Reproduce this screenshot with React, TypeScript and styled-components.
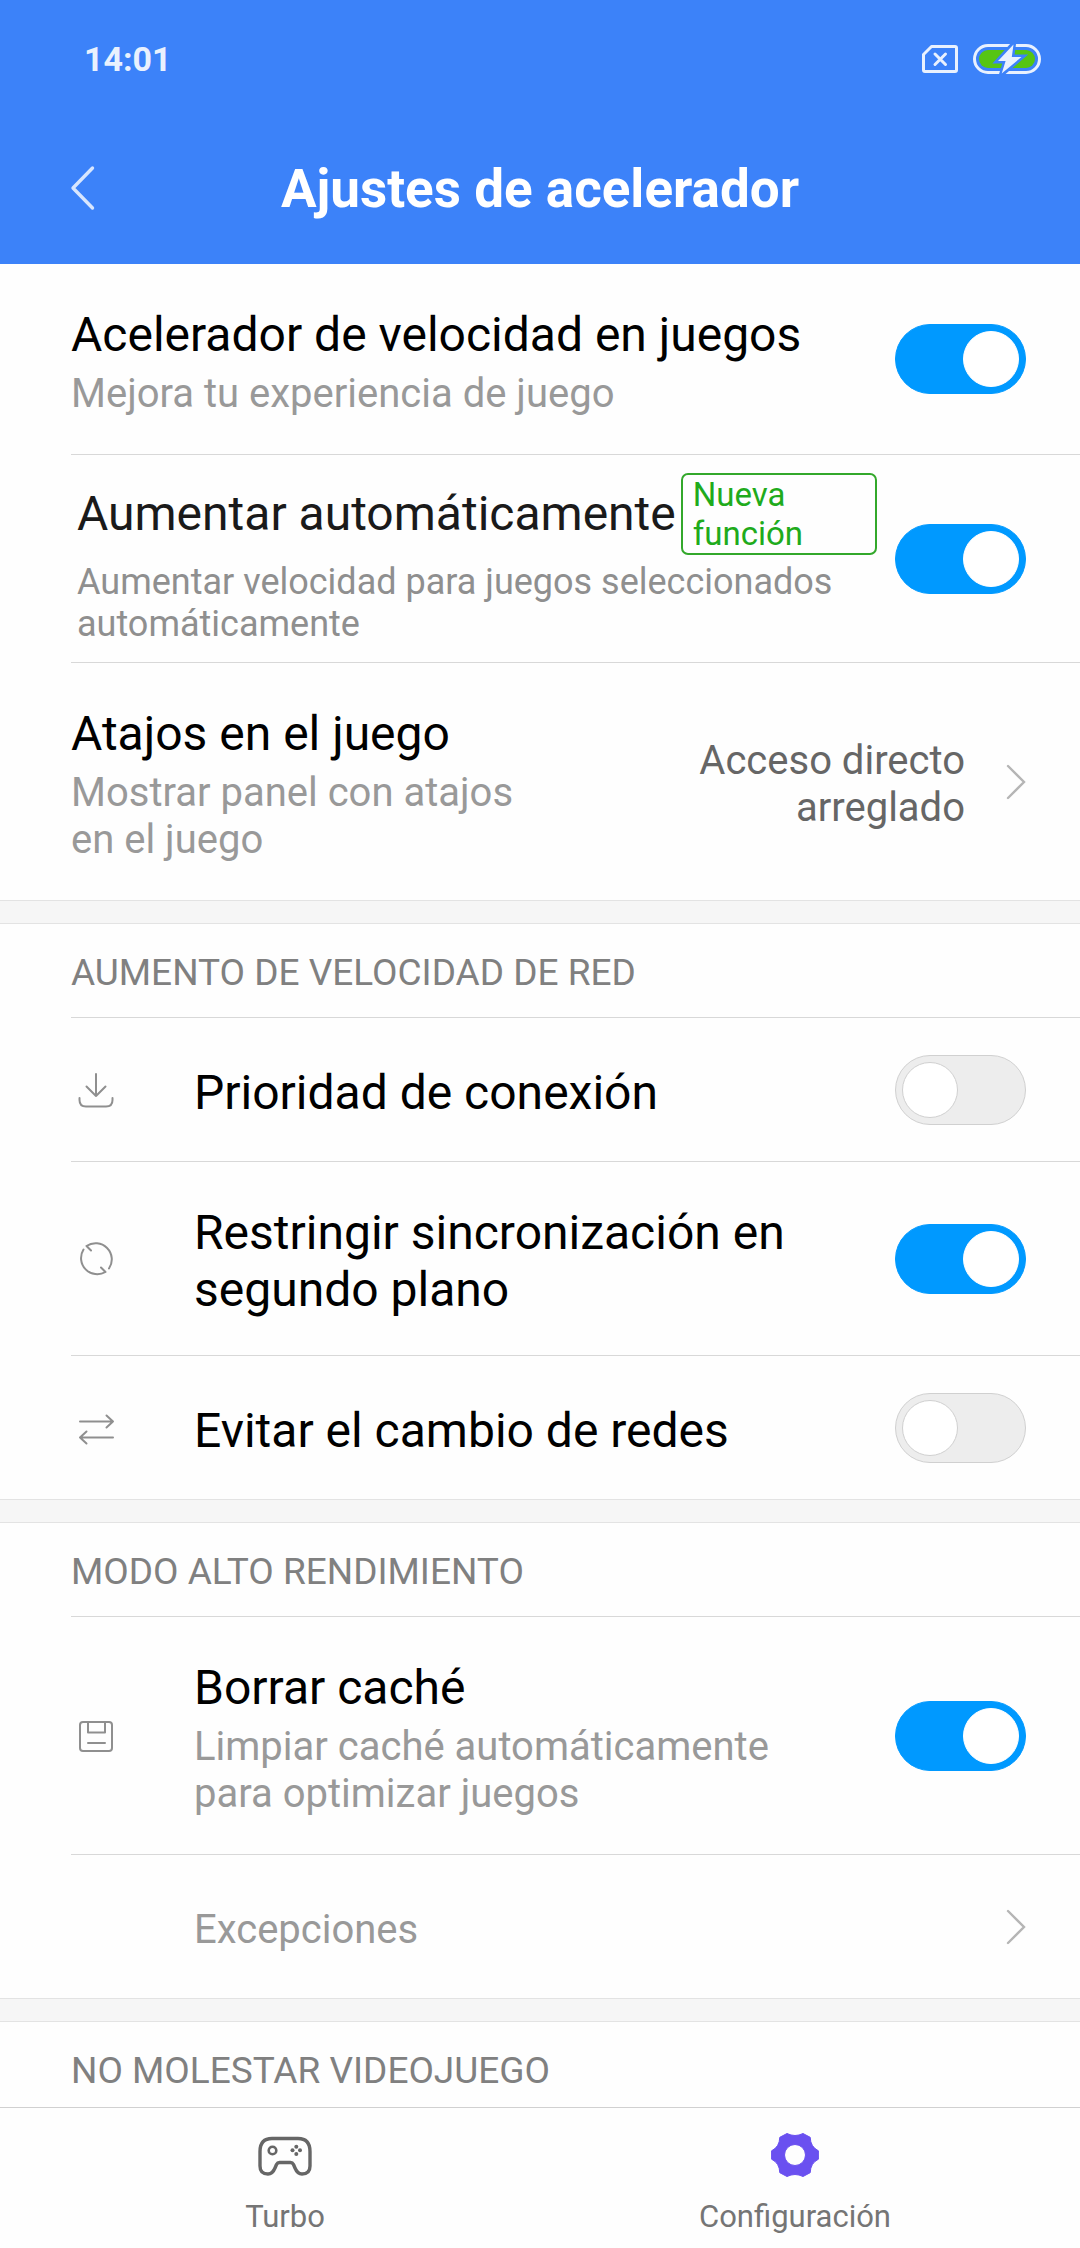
import React, { useId, useState } from "react";
import styled, { createGlobalStyle, css } from "styled-components";

const color = {
  header: "#3c82f9",
  page: "#fefefe",
  accent: "#0099ff",
  divider: "#d8d8d8",
  band: "#f6f6f6",
  bandEdge: "#e3e3e3",
  hint: "#999999",
  icon: "#8f8f8f",
};

const GlobalStyle = createGlobalStyle`
  *, *::before, *::after { box-sizing: border-box; }
  body {
    margin: 0;
    background: ${color.page};
    font-family: Roboto, "Noto Sans", sans-serif;
  }
`;

const Screen = styled.div`
  display: flex;
  flex-direction: column;
  height: 100vh;
`;

const Header = styled.header`
  flex: none;
  padding-bottom: 6px;
  background: ${color.header};
  color: #ffffff;
`;

const StatusBar = styled.div`
  display: flex;
  align-items: center;
  justify-content: space-between;
  height: 117px;
  padding: 0 39px 0 84px;
`;

const Clock = styled.time`
  font-size: 34px;
  font-weight: 700;
  line-height: 40px;
  color: #e9f1fe;
`;

const StatusIcons = styled.div`
  display: flex;
  align-items: center;
  gap: 15px;
`;

const TitleBar = styled.div`
  display: grid;
  grid-template-columns: 1fr auto 1fr;
  align-items: center;
  height: 141px;
`;

const plainButton = css`
  border: 0;
  background: none;
  font-family: inherit;
  cursor: pointer;
`;

const BackButton = styled.button`
  ${plainButton}
  display: flex;
  justify-self: start;
  padding: 0 0 0 69px;
`;

const Title = styled.h1`
  margin: 0;
  padding-top: 2px;
  font-size: 53px;
  font-weight: 700;
  line-height: 62px;
`;

const Content = styled.main`
  flex: 1;
  min-height: 0;
  overflow-y: auto;
  scrollbar-width: none;
`;

const Section = styled.section`
  & + & {
    border-top: 1px solid ${color.bandEdge};
  }
  & + &::before {
    content: "";
    display: block;
    height: 23px;
    background: ${color.band};
    border-bottom: 1px solid ${color.bandEdge};
  }
`;

const SectionTitle = styled.h2`
  display: flex;
  align-items: center;
  height: 94px;
  margin: 0 0 0 71px;
  padding-top: 3px;
  border-bottom: 1px solid ${color.divider};
  font-size: 37px;
  font-weight: 400;
  line-height: 43px;
  color: #808080;
`;

const List = styled.ul`
  margin: 0 0 0 71px;
  padding: 0;
  list-style: none;
`;

const Item = styled.li`
  & + & {
    border-top: 1px solid ${color.divider};
  }
`;

const rowLayout = css`
  display: flex;
  align-items: center;
  width: 100%;
  min-height: 143px;
  padding: 36px 54px 36px 0;
`;

const Row = styled.div`
  ${rowLayout}
`;

const FeatureRow = styled.div`
  ${rowLayout}
  gap: 18px;
  min-height: 207px;
  padding: 17px 54px 17px 6px;
`;

const RowButton = styled.button`
  ${plainButton}
  ${rowLayout}
  text-align: left;
`;

const IconSlot = styled.span`
  display: flex;
  flex: none;
  width: 50px;
  margin-right: 73px;
`;

const RowText = styled.span`
  display: flex;
  flex: 1;
  flex-direction: column;
  gap: 7px;
  min-width: 0;
  margin-right: 54px;
  padding: 6px 0 1px;
`;

const RowTitle = styled.label<{ $muted?: boolean }>`
  font-size: 48px;
  line-height: 57px;
  color: ${(p) => (p.$muted ? "#1a1a1a" : "#000000")};
`;

const RowHint = styled.span`
  font-size: 40px;
  line-height: 47px;
  color: ${color.hint};
`;

const RowValue = styled.span`
  flex: none;
  width: 370px;
  margin-right: 41px;
  padding: 6px 0 1px;
  font-size: 40px;
  line-height: 47px;
  text-align: right;
  color: #666666;
`;

const FeatureText = styled.div`
  display: flex;
  flex: 1;
  flex-direction: column;
  gap: 6px;
  min-width: 0;
`;

const FeatureHead = styled.div`
  display: flex;
  align-items: center;
  gap: 5px;
`;

const FeatureHint = styled.span`
  font-size: 36px;
  line-height: 42px;
  color: #8f8f8f;
`;

const Badge = styled.span`
  flex: 1;
  padding: 0 10px;
  border: 2px solid #33a82b;
  border-radius: 7px;
  font-size: 33px;
  line-height: 39px;
  color: #1fab1c;
`;

const Toggle = styled.input`
  appearance: none;
  flex: none;
  display: flex;
  align-items: center;
  width: 131px;
  height: 70px;
  margin: 0;
  padding: 0 6px;
  border: 1px solid #d0d0d0;
  border-radius: 35px;
  background: #ededed;
  cursor: pointer;

  &::before {
    content: "";
    width: 56px;
    height: 56px;
    border: 1px solid #d0d0d0;
    border-radius: 50%;
    background: #ffffff;
  }

  &:checked {
    justify-content: flex-end;
    border-color: ${color.accent};
    background: ${color.accent};
  }

  &:checked::before {
    border-color: #ffffff;
  }
`;

const LineIcon = styled.svg.attrs({ viewBox: "0 0 50 50", "aria-hidden": true })`
  width: 50px;
  height: 50px;
  fill: none;
  stroke: ${color.icon};
  stroke-width: 2;
  stroke-linecap: round;
  stroke-linejoin: round;
`;

const NavBar = styled.nav`
  display: flex;
  flex: none;
  padding: 0 30px;
  border-top: 1px solid #d0d0d0;
  background: ${color.page};
`;

const NavButton = styled.button`
  ${plainButton}
  display: flex;
  flex: 1;
  flex-direction: column;
  align-items: center;
  gap: 18px;
  padding: 22px 0 13px;
  font-size: 31px;
  line-height: 37px;
  color: #757575;
`;

const Chevron = () => (
  <svg width="20" height="36" viewBox="0 0 20 36" fill="none" stroke="#b5b5b5" strokeWidth="2.4" strokeLinecap="round" aria-hidden="true">
    <path d="M2 2 18 18 2 34" />
  </svg>
);

const BackIcon = () => (
  <svg width="26" height="46" viewBox="0 0 26 46" fill="none" stroke="#d8e6fe" strokeWidth="3.4" strokeLinecap="round" strokeLinejoin="round" aria-hidden="true">
    <path d="M23.5 3 4 23 23.5 43" />
  </svg>
);

const SimIcon = () => (
  <svg width="36" height="28" viewBox="0 0 36 28" fill="none" stroke="#e9f1fe" strokeWidth="3" strokeLinejoin="round" aria-hidden="true">
    <path d="M9.5 1.5H33q1.5 0 1.5 1.5v22q0 1.5-1.5 1.5H3q-1.5 0-1.5-1.5V9.5z" />
    <path d="M13 9 23.5 19.5M23.5 9 13 19.5" strokeLinecap="round" />
  </svg>
);

const BatteryIcon = () => (
  <svg width="68" height="30" viewBox="0 0 68 30" aria-hidden="true">
    <rect x="1.5" y="1.5" width="65" height="27" rx="13.5" fill="none" stroke="#e9f1fe" strokeWidth="3" />
    <rect x="6" y="6" width="56" height="18" rx="9" fill="#56c513" />
    <path d="M40.5 0 38.8 13h9.7L28.7 30l3.9-13H25z" fill="#e9f1fe" stroke={color.header} strokeWidth="5" />
    <path d="M40.5.5 38.8 13h9.7L28.7 29.5 32.6 17H25z" fill="#e9f1fe" />
  </svg>
);

const DownloadIcon = () => (
  <LineIcon>
    <path d="M25 9v22M15.5 21.5 25 31l9.5-9.5M8.5 33v2q0 6.500 6.500 6.500h20q6.500 0 6.500-6.500v-2" />
  </LineIcon>
);

const SyncIcon = () => (
  <LineIcon>
    <path d="M20 16.5 15.5 12A16.2 16.2 0 0 1 38 34.5M12.5 15.5A16.2 16.2 0 0 0 34.5 38L30 33.5" />
  </LineIcon>
);

const SwapIcon = () => (
  <LineIcon>
    <path d="M9 18.5h33M35.5 12.5 42 18.5l-6.5 6M42 34.5H9M15.5 28.5 9 34.5l6.5 6" />
  </LineIcon>
);

const DiskIcon = () => (
  <LineIcon>
    <rect x="9" y="11" width="32" height="29" rx="3" />
    <path d="M17 11v10.5h17V11M17 32h17" />
  </LineIcon>
);

const GamepadIcon = () => (
  <svg width="54" height="50" viewBox="0 0 54 50" fill="none" stroke="#666666" strokeWidth="3.4" strokeLinejoin="round" aria-hidden="true">
    <path d="M14 8.5h26q12 0 12 13V36q0 8-8 8-4.5 0-7-6l-1.5-3.5q-1-2-3-2h-11q-2 0-3 2L17 38q-2.5 6-7 6-8 0-8-8V21.5q0-13 12-13z" />
    <circle cx="14.5" cy="20.5" r="3.8" strokeWidth="2.6" />
    <g fill="#666666" stroke="none">
      <circle cx="38.3" cy="16.7" r="2" />
      <circle cx="38.3" cy="24" r="2" />
      <circle cx="34.5" cy="20.3" r="2" />
      <circle cx="42" cy="20.3" r="2" />
    </g>
  </svg>
);

const GearIcon = () => (
  <svg width="54" height="50" viewBox="-27 -25 54 50" aria-hidden="true">
    <path
      fill="#6a50f0"
      fillRule="evenodd"
      stroke="#6a50f0"
      strokeLinejoin="round"
      d="M-8-21.5Q0-17.5 8-21.5L15.2-17.7Q15.5-8 23.4-4.2V4.2Q15.5 8 15.2 17.7L8 21.5Q0 17.5-8 21.5L-15.2 17.7Q-15.5 8-23.4 4.2V-4.2Q-15.5-8-15.2-17.7ZM10.5 0A10.5 10.5 0 1 0-10.5 0A10.5 10.5 0 1 0 10.5 0Z"
    />
  </svg>
);

type ToggleRowProps = {
  title: string;
  hint?: string;
  icon?: React.ReactNode;
  initial?: boolean;
};

const ToggleRow = ({ title, hint, icon, initial = false }: ToggleRowProps) => {
  const id = useId();
  const [on, setOn] = useState(initial);
  return (
    <Item>
      <Row>
        {icon && <IconSlot>{icon}</IconSlot>}
        <RowText>
          <RowTitle htmlFor={id}>{title}</RowTitle>
          {hint && <RowHint>{hint}</RowHint>}
        </RowText>
        <Toggle id={id} type="checkbox" role="switch" checked={on} onChange={() => setOn(!on)} />
      </Row>
    </Item>
  );
};

const FeatureToggleRow = () => {
  const id = useId();
  const [on, setOn] = useState(true);
  return (
    <Item>
      <FeatureRow>
        <FeatureText>
          <FeatureHead>
            <RowTitle $muted htmlFor={id}>Aumentar automáticamente</RowTitle>
            <Badge>Nueva función</Badge>
          </FeatureHead>
          <FeatureHint>Aumentar velocidad para juegos seleccionados automáticamente</FeatureHint>
        </FeatureText>
        <Toggle id={id} type="checkbox" role="switch" checked={on} onChange={() => setOn(!on)} />
      </FeatureRow>
    </Item>
  );
};

export default function App() {
  return (
    <Screen>
      <GlobalStyle />
      <Header>
        <StatusBar>
          <Clock>14:01</Clock>
          <StatusIcons>
            <SimIcon />
            <BatteryIcon />
          </StatusIcons>
        </StatusBar>
        <TitleBar>
          <BackButton type="button" aria-label="Atrás">
            <BackIcon />
          </BackButton>
          <Title>Ajustes de acelerador</Title>
        </TitleBar>
      </Header>

      <Content>
        <Section>
          <List>
            <ToggleRow title="Acelerador de velocidad en juegos" hint="Mejora tu experiencia de juego" initial />
            <FeatureToggleRow />
            <Item>
              <RowButton type="button">
                <RowText>
                  <RowTitle as="span">Atajos en el juego</RowTitle>
                  <RowHint>Mostrar panel con atajos en el juego</RowHint>
                </RowText>
                <RowValue>Acceso directo arreglado</RowValue>
                <Chevron />
              </RowButton>
            </Item>
          </List>
        </Section>

        <Section>
          <SectionTitle>AUMENTO DE VELOCIDAD DE RED</SectionTitle>
          <List>
            <ToggleRow title="Prioridad de conexión" icon={<DownloadIcon />} />
            <ToggleRow title="Restringir sincronización en segundo plano" icon={<SyncIcon />} initial />
            <ToggleRow title="Evitar el cambio de redes" icon={<SwapIcon />} />
          </List>
        </Section>

        <Section>
          <SectionTitle>MODO ALTO RENDIMIENTO</SectionTitle>
          <List>
            <ToggleRow title="Borrar caché" hint="Limpiar caché automáticamente para optimizar juegos" icon={<DiskIcon />} initial />
            <Item>
              <RowButton type="button">
                <IconSlot />
                <RowText>
                  <RowHint>Excepciones</RowHint>
                </RowText>
                <Chevron />
              </RowButton>
            </Item>
          </List>
        </Section>

        <Section>
          <SectionTitle>NO MOLESTAR VIDEOJUEGO</SectionTitle>
        </Section>
      </Content>

      <NavBar>
        <NavButton type="button">
          <GamepadIcon />
          Turbo
        </NavButton>
        <NavButton type="button" aria-current="page">
          <GearIcon />
          Configuración
        </NavButton>
      </NavBar>
    </Screen>
  );
}
